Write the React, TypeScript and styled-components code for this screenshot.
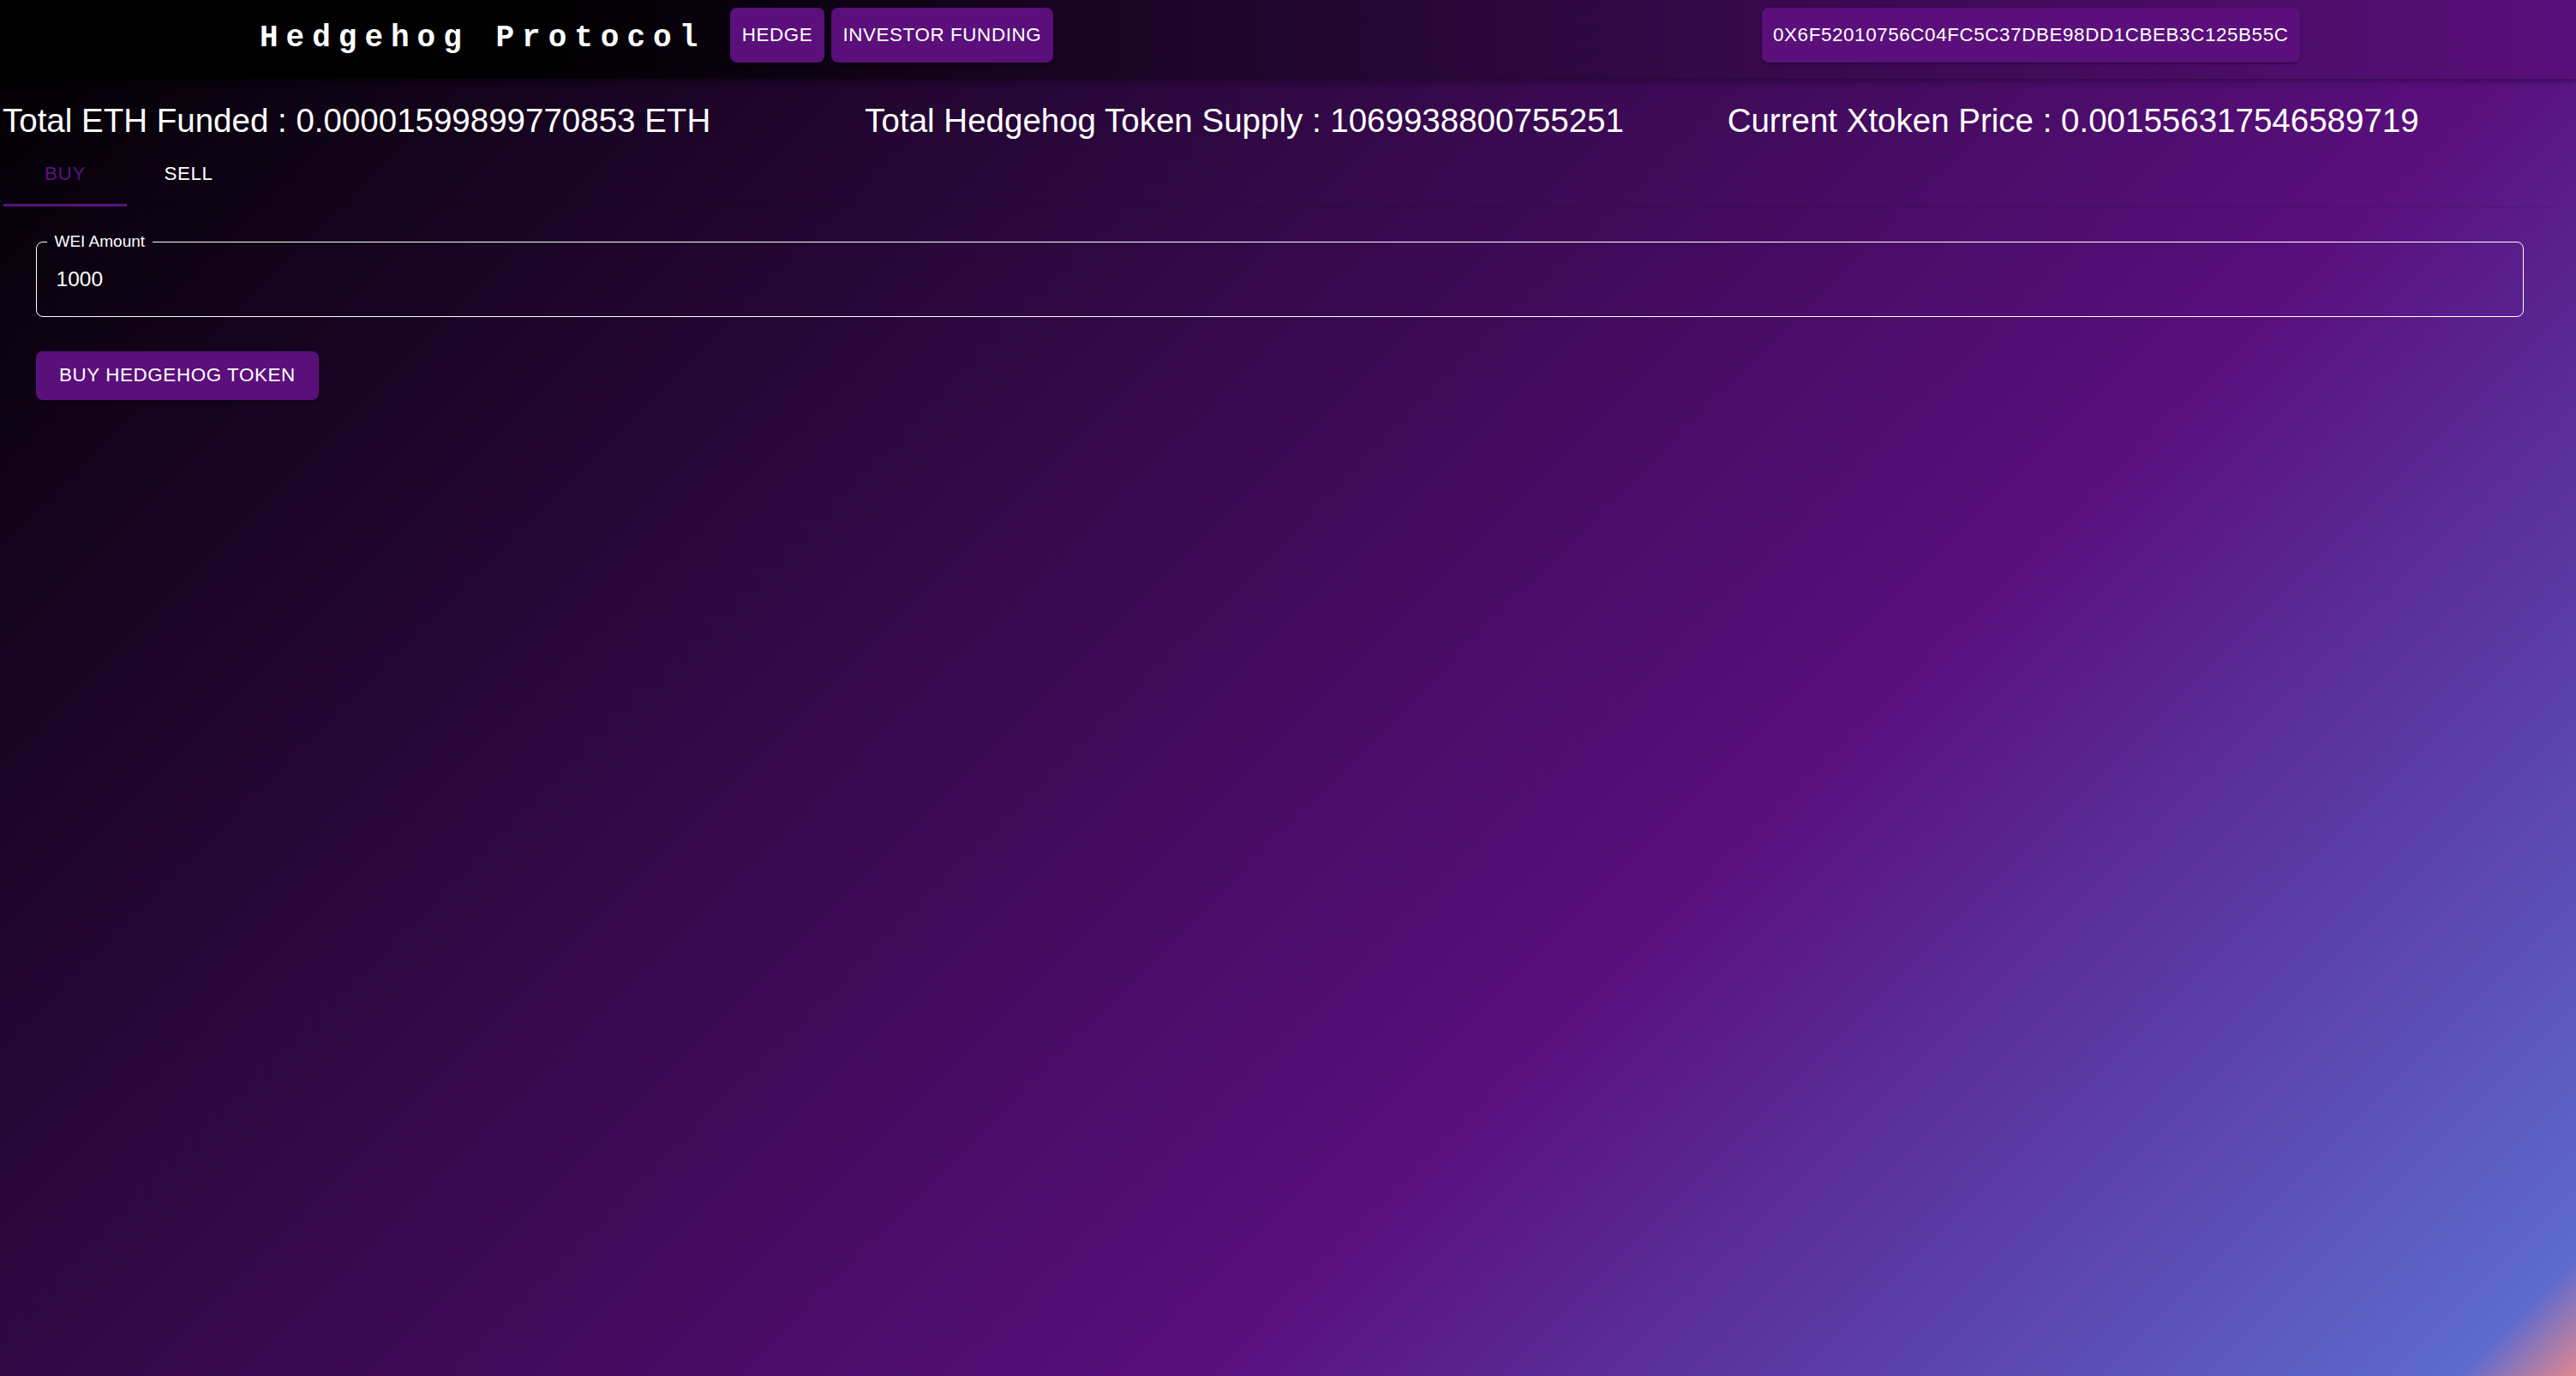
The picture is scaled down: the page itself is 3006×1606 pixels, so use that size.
import React, { useState } from "react";
import styled, { createGlobalStyle } from "styled-components";

const GlobalStyle = createGlobalStyle`
  html, body {
    margin: 0;
    padding: 0;
    background: #000;
  }
  body {
    font-family: "Liberation Sans", Arial, Helvetica, sans-serif;
    color: #fff;
  }
  *, *::before, *::after {
    box-sizing: border-box;
  }
`;

const Page = styled.div`
  min-height: 100vh;
  width: 100%;
  display: flex;
  flex-direction: column;
  background: linear-gradient(
    135deg,
    #000000 0%,
    #590f7d 65%,
    #5d6ace 97%,
    #e2878f 100%
  );
`;

const Header = styled.header`
  height: 92px;
  display: flex;
  align-items: center;
  padding: 0 322px 10px 303px;
  background: linear-gradient(90deg, #000000 20%, #5a0f7b 100%);
  box-shadow: 0 2px 4px -1px rgba(0, 0, 0, 0.2), 0 4px 5px 0 rgba(0, 0, 0, 0.14),
    0 1px 10px 0 rgba(0, 0, 0, 0.12);
`;

const Title = styled.div`
  font-family: "Courier New", "Liberation Mono", monospace;
  font-weight: 700;
  font-size: 36px;
  letter-spacing: 9px;
  color: #fff;
  white-space: nowrap;
  margin: 6px 29px 0 0;
`;

const NavGroup = styled.nav`
  display: flex;
  gap: 8px;
`;

const AccountSlot = styled.div`
  margin-left: auto;
  display: flex;
`;

const PillButton = styled.button`
  height: 64px;
  padding: 0 13.5px;
  border: 0;
  border-radius: 8px;
  background: #5a0f7b;
  color: #fff;
  font-family: "Liberation Sans", Arial, sans-serif;
  font-size: 22.4px;
  font-weight: 400;
  letter-spacing: 0.6px;
  text-transform: uppercase;
  white-space: nowrap;
  cursor: pointer;
  box-shadow: 0 3px 1px -2px rgba(0, 0, 0, 0.2), 0 2px 2px 0 rgba(0, 0, 0, 0.14),
    0 1px 5px 0 rgba(0, 0, 0, 0.12);
`;

const StatsRow = styled.div`
  display: grid;
  grid-template-columns: repeat(3, 1fr);
  column-gap: 16px;
  padding-left: 3px;
  margin-top: 27px;
`;

const Stat = styled.div`
  font-size: 38.5px;
  color: #fff;
  white-space: nowrap;
`;

const TabBar = styled.div`
  display: flex;
  height: 78px;
  margin: 1px 26px 0 4px;
  border-bottom: 1px solid rgba(0, 0, 0, 0.12);
`;

const Tab = styled.button<{ $active: boolean }>`
  position: relative;
  width: 144px;
  height: 100%;
  padding: 0;
  border: 0;
  background: transparent;
  color: ${(p) => (p.$active ? "#5c1182" : "#ffffff")};
  font-family: "Liberation Sans", Arial, sans-serif;
  font-size: 22.4px;
  letter-spacing: 0.6px;
  text-transform: uppercase;
  cursor: pointer;
`;

const Indicator = styled.span`
  position: absolute;
  left: 0;
  right: 0;
  bottom: 0;
  height: 3px;
  background: #5c1182;
`;

const FormArea = styled.section`
  display: flex;
  flex-direction: column;
  align-items: flex-start;
  gap: 40px;
  padding: 30px 61px 0 42px;
`;

const Field = styled.fieldset`
  align-self: stretch;
  margin: 0;
  min-width: 0;
  padding: 0 0 8.5px 0;
  border: 1.5px solid #ffffff;
  border-radius: 8px;
`;

const Legend = styled.legend`
  margin-left: 11.5px;
  padding: 0 9px;
  font-size: 19px;
  line-height: 20px;
  color: #fff;
`;

const AmountInput = styled.input`
  display: block;
  width: 100%;
  height: 68px;
  padding: 0 22.5px;
  border: 0;
  outline: none;
  background: transparent;
  color: #fff;
  font-family: "Liberation Sans", Arial, sans-serif;
  font-size: 24.5px;
`;

const ActionButton = styled(PillButton)`
  height: 57px;
  padding: 0 27px;
`;

export default function App() {
  const [tab, setTab] = useState<"buy" | "sell">("buy");
  const [amount, setAmount] = useState("1000");

  return (
    <>
      <GlobalStyle />
      <Page>
        <Header>
          <Title>Hedgehog Protocol</Title>
          <NavGroup>
            <PillButton>Hedge</PillButton>
            <PillButton>Investor Funding</PillButton>
          </NavGroup>
          <AccountSlot>
            <PillButton>0x6f52010756c04fc5c37dbe98dd1cbeb3c125b55c</PillButton>
          </AccountSlot>
        </Header>

        <StatsRow>
          <Stat>Total ETH Funded : 0.00001599899770853 ETH</Stat>
          <Stat>Total Hedgehog Token Supply : 1069938800755251</Stat>
          <Stat>Current Xtoken Price : 0.001556317546589719</Stat>
        </StatsRow>

        <TabBar>
          <Tab $active={tab === "buy"} onClick={() => setTab("buy")}>
            Buy
            {tab === "buy" && <Indicator />}
          </Tab>
          <Tab $active={tab === "sell"} onClick={() => setTab("sell")}>
            Sell
            {tab === "sell" && <Indicator />}
          </Tab>
        </TabBar>

        <FormArea>
          <Field>
            <Legend>WEI Amount</Legend>
            <AmountInput
              value={amount}
              onChange={(e) => setAmount(e.target.value)}
            />
          </Field>
          <ActionButton>
            {tab === "buy" ? "Buy Hedgehog Token" : "Sell Hedgehog Token"}
          </ActionButton>
        </FormArea>
      </Page>
    </>
  );
}
